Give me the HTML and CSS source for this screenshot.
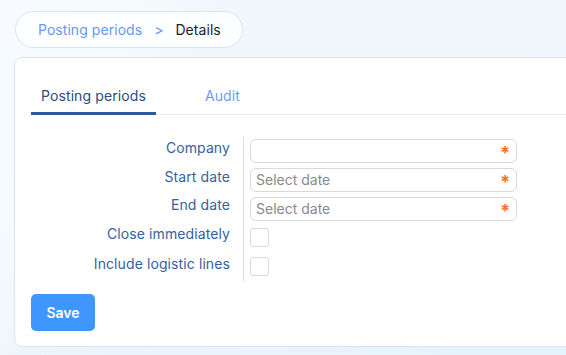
FILE: index.html
```html
<!DOCTYPE html>
<html lang="en">
<head>
<meta charset="utf-8">
<title>Posting periods - Details</title>
<link rel="stylesheet" href="styles.css">
</head>
<body>
<div class="page">
  <nav class="breadcrumb">
    <a class="crumb-link" href="#">Posting periods</a>
    <span class="crumb-sep">&gt;</span>
    <span class="crumb-current">Details</span>
  </nav>
  <section class="card">
    <div class="tabs">
      <div class="tab active">Posting periods</div>
      <div class="tab">Audit</div>
    </div>
    <form class="form">
      <div class="label l-input">Company</div>
      <div class="control c-input"><div class="input"><span class="placeholder"></span><span class="req">*</span></div></div>

      <div class="label l-input">Start date</div>
      <div class="control c-input"><div class="input"><span class="placeholder">Select date</span><span class="req">*</span></div></div>

      <div class="label l-input l-tight">End date</div>
      <div class="control c-input"><div class="input"><span class="placeholder">Select date</span><span class="req">*</span></div></div>

      <div class="label l-check">Close immediately</div>
      <div class="control c-check"><span class="checkbox"></span></div>

      <div class="label l-check2">Include logistic lines</div>
      <div class="control c-check2"><span class="checkbox"></span></div>
    </form>
    <button class="btn-save" type="button">Save</button>
  </section>
</div>
</body>
</html>
```

FILE: styles.css
```css
html, body {
  margin: 0;
  height: 100%;
}
body {
  overflow: hidden;
  font-family: Inter, "Noto Sans", sans-serif;
  font-size: 14px;
  background:
    linear-gradient(160deg, rgba(255,255,255,0) 40%, rgba(228,242,251,0.9) 100%),
    linear-gradient(115deg, #f7fbff 0%, #f5fafe 22%, #f1f6fd 30%, #f1f6fd 100%);
}
.page {
  padding: 11px 0 0 14px;
  overflow: hidden;
  height: 100%;
  box-sizing: border-box;
}
.breadcrumb {
  display: inline-flex;
  align-items: center;
  gap: 12px;
  height: 35px;
  padding: 0 21px 0 22px;
  margin-left: 1px;
  border: 1px solid #d5e6f8;
  border-radius: 19px;
  background: rgba(255,255,255,0.75);
  line-height: 20px;
  letter-spacing: 0.05px;
}
.crumb-link {
  color: #6698ef;
  text-decoration: none;
}
.crumb-sep {
  color: #6698ef;
}
.crumb-current {
  color: #1d1d2b;
}
.card {
  margin-top: 9px;
  margin-right: -30px;
  height: 288px;
  border: 1px solid #d6e6f6;
  border-radius: 8px;
  background: #fff;
  padding: 0 16px;
  box-sizing: content-box;
}
.tabs {
  display: flex;
  gap: 39px;
  border-bottom: 1px solid #ececec;
}
.tab {
  position: relative;
  padding: 28px 10px 8px;
  line-height: 20px;
  color: #6b9cf5;
  letter-spacing: 0.1px;
}
.tab.active {
  color: #2b4d7e;
}
.tab.active::after {
  content: "";
  position: absolute;
  left: 0;
  right: 0;
  bottom: -1px;
  height: 3px;
  background: #2c5d9b;
}
.form {
  display: grid;
  grid-template-columns: 212px 1fr;
  margin-top: 22px;
}
.label {
  text-align: right;
  padding-right: 13px;
  line-height: 20px;
  color: #3562a0;
  letter-spacing: 0.1px;
}
.control {
  border-left: 1px solid #d9d9d9;
  padding-left: 6px;
}
.l-input { padding-top: 1px; }
.l-tight { padding-top: 0; }
.c-input { padding-top: 2px; padding-bottom: 3px; }
.l-check { padding-top: 0; }
.c-check { padding-top: 4px; padding-bottom: 6px; height: 19px; }
.l-check2 { padding-top: 1px; }
.c-check2 { padding-top: 4px; padding-bottom: 5px; height: 19px; }
.input {
  box-sizing: border-box;
  width: 267px;
  height: 24px;
  border: 1px solid #d9d9d9;
  border-radius: 6px;
  display: flex;
  align-items: center;
  justify-content: space-between;
  padding: 0 6px 0 5px;
}
.placeholder {
  color: #8a8a8a;
  line-height: 20px;
}
.req {
  color: #ff6a1a;
  font-size: 18px;
  font-weight: 600;
  line-height: 20px;
  padding-top: 6px;
}
.checkbox {
  display: block;
  box-sizing: border-box;
  width: 19px;
  height: 19px;
  border: 1px solid #d9d9d9;
  border-radius: 3px;
  background: #fff;
}
.btn-save {
  margin-top: 13px;
  width: 64px;
  height: 37px;
  border: none;
  border-radius: 5px;
  background: #4096ff;
  color: #fff;
  font-family: Inter, "Noto Sans", sans-serif;
  font-size: 14px;
  font-weight: 600;
  padding: 0;
}
```
